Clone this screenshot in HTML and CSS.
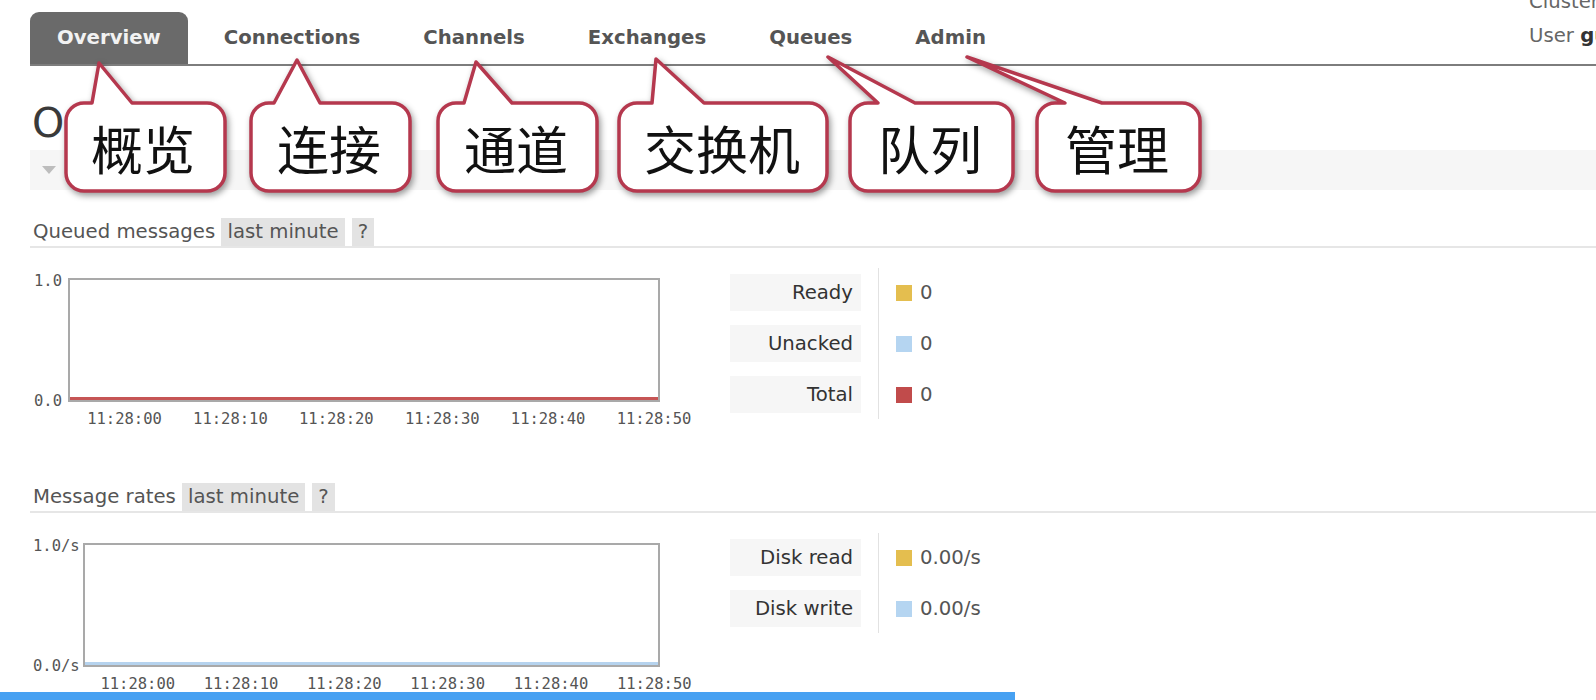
FILE: index.html
```html
<!DOCTYPE html>
<html lang="en">
<head>
<meta charset="utf-8">
<title>RabbitMQ Management - Overview</title>
<link rel="stylesheet" href="styles.css">
</head>
<body>
<div class="page">
  <header class="top">
    <ul class="tabs">
      <li class="tab active">Overview</li>
      <li class="tab">Connections</li>
      <li class="tab">Channels</li>
      <li class="tab">Exchanges</li>
      <li class="tab">Queues</li>
      <li class="tab">Admin</li>
    </ul>
    <div class="login">
      <div>Cluster <b>rabbit@localhost</b></div>
      <div>User <b>guest</b></div>
    </div>
  </header>

  <main class="content">
    <h1 class="title">Overview</h1>
    <div class="totals-bar"><span class="tri"></span></div>

    <section class="graph-sec">
      <h3 class="sec-head">Queued messages <span class="badge">last minute</span><span class="badge">?</span></h3>
      <div class="graph-row">
        <div class="chart">
          <div class="plot-row">
            <div class="yaxis"><span>1.0</span><span>0.0</span></div>
            <div class="plot-col">
              <div class="plot line-red"></div>
              <div class="xaxis"><span>11:28:00</span><span>11:28:10</span><span>11:28:20</span><span>11:28:30</span><span>11:28:40</span><span>11:28:50</span></div>
            </div>
          </div>
        </div>
        <div class="legend">
          <div class="legend-labels">
            <div class="lbl">Ready</div>
            <div class="lbl">Unacked</div>
            <div class="lbl">Total</div>
          </div>
          <div class="legend-values">
            <div class="val"><span class="sq gold"></span>0</div>
            <div class="val"><span class="sq blue"></span>0</div>
            <div class="val"><span class="sq red"></span>0</div>
          </div>
        </div>
      </div>
    </section>

    <section class="graph-sec">
      <h3 class="sec-head">Message rates <span class="badge">last minute</span><span class="badge">?</span></h3>
      <div class="graph-row">
        <div class="chart">
          <div class="plot-row">
            <div class="yaxis yaxis-rate"><span>1.0/s</span><span>0.0/s</span></div>
            <div class="plot-col">
              <div class="plot line-blue"></div>
              <div class="xaxis"><span>11:28:00</span><span>11:28:10</span><span>11:28:20</span><span>11:28:30</span><span>11:28:40</span><span>11:28:50</span></div>
            </div>
          </div>
        </div>
        <div class="legend">
          <div class="legend-labels">
            <div class="lbl">Disk read</div>
            <div class="lbl">Disk write</div>
          </div>
          <div class="legend-values">
            <div class="val"><span class="sq gold"></span>0.00/s</div>
            <div class="val"><span class="sq blue"></span>0.00/s</div>
          </div>
        </div>
      </div>
    </section>
  </main>
</div>

<svg class="callouts" width="1596" height="210" viewBox="0 0 1596 210">
  <g class="bubble">
    <path d="M84 103 L92 103 L99 63 L132 103 L207 103 A18 18 0 0 1 225 121 L225 173 A18 18 0 0 1 207 191 L84 191 A18 18 0 0 1 66 173 L66 121 A18 18 0 0 1 84 103 Z"/>
    <text x="143" y="147">概览</text>
  </g>
  <g class="bubble">
    <path d="M269 103 L274 103 L297 60 L320 103 L392 103 A18 18 0 0 1 410 121 L410 173 A18 18 0 0 1 392 191 L269 191 A18 18 0 0 1 251 173 L251 121 A18 18 0 0 1 269 103 Z"/>
    <text x="329" y="147">连接</text>
  </g>
  <g class="bubble">
    <path d="M456 103 L464 103 L476 62 L512 103 L579 103 A18 18 0 0 1 597 121 L597 173 A18 18 0 0 1 579 191 L456 191 A18 18 0 0 1 438 173 L438 121 A18 18 0 0 1 456 103 Z"/>
    <text x="516" y="147">通道</text>
  </g>
  <g class="bubble">
    <path d="M637 103 L652 103 L656 59 L704 103 L809 103 A18 18 0 0 1 827 121 L827 173 A18 18 0 0 1 809 191 L637 191 A18 18 0 0 1 619 173 L619 121 A18 18 0 0 1 637 103 Z"/>
    <text x="722" y="147">交换机</text>
  </g>
  <g class="bubble">
    <path d="M868 103 L878 103 L828 57 L915 103 L995 103 A18 18 0 0 1 1013 121 L1013 173 A18 18 0 0 1 995 191 L868 191 A18 18 0 0 1 850 173 L850 121 A18 18 0 0 1 868 103 Z"/>
    <text x="930" y="147">队列</text>
  </g>
  <g class="bubble">
    <path d="M1055 103 L1065 103 L967 57 L1102 103 L1182 103 A18 18 0 0 1 1200 121 L1200 173 A18 18 0 0 1 1182 191 L1055 191 A18 18 0 0 1 1037 173 L1037 121 A18 18 0 0 1 1055 103 Z"/>
    <text x="1117" y="147">管理</text>
  </g>
</svg>

<div class="progress"></div>
</body>
</html>
```

FILE: styles.css
```css
html, body {
  margin: 0;
  padding: 0;
  overflow: hidden;
  background: #fff;
}

body {
  position: relative;
  width: 1596px;
  height: 700px;
  font-family: "DejaVu Sans", Verdana, sans-serif;
  font-size: 19.7px;
  color: #555;
}

/* ---------- header ---------- */
.top {
  display: flex;
  height: 64px;
  margin-left: 30px;
  border-bottom: 2px solid #7d7d7d;
}

.tabs {
  flex: 1;
  display: flex;
  align-self: flex-end;
  gap: 9px;
  margin: 0;
  padding: 0;
  list-style: none;
}

.tab {
  height: 52px;
  line-height: 52px;
  padding: 0 27px;
  font-weight: bold;
  font-size: 19.7px;
  color: #555;
  border-radius: 9px 9px 0 0;
  white-space: nowrap;
}

.tab.active {
  background: #6a6a6a;
  color: #f2f2f2;
}

.login {
  width: 67px;
  flex-shrink: 0;
  margin-top: -15px;
  line-height: 34px;
  white-space: nowrap;
  color: #666;
}

.login b {
  color: #333;
}

/* ---------- content ---------- */
.content {
  padding-left: 30px;
}

.title {
  margin: 33px 0 0 2px;
  height: 48px;
  font-size: 41px;
  line-height: 48px;
  font-weight: normal;
  color: #3a3a3a;
}

.totals-bar {
  display: flex;
  align-items: center;
  height: 40px;
  margin-top: 3px;
  padding-left: 12px;
  background: #f6f6f6;
}

.tri {
  width: 0;
  height: 0;
  border-left: 7px solid transparent;
  border-right: 7px solid transparent;
  border-top: 8px solid #bdbdbd;
}

.graph-sec {
  margin-bottom: 64px;
}

.sec-head {
  display: flex;
  align-items: stretch;
  height: 28px;
  line-height: 28px;
  margin: 28px 0 0;
  padding-left: 3px;
  font-size: 19.7px;
  font-weight: normal;
  color: #555;
  border-bottom: 2px solid #e6e6e6;
  white-space: pre;
}

.badge {
  padding: 0 6px;
  background: #e3e3e3;
  color: #555;
}

.badge + .badge {
  margin-left: 7px;
}

.graph-row {
  display: flex;
  align-items: flex-start;
  margin-top: 20px;
}

.chart {
  width: 630px;
  margin-top: 10px;
  flex-shrink: 0;
}

.plot-row {
  display: flex;
  height: 124px;
}

.yaxis {
  display: flex;
  flex-direction: column;
  justify-content: space-between;
  margin: -5px 0 -7px;
  padding: 0 6px 0 4px;
  font-family: "DejaVu Sans Mono", monospace;
  font-size: 15.5px;
  line-height: 16px;
  color: #555;
}

.yaxis-rate {
  padding: 0 3px 0 3px;
}

.plot-col {
  flex: 1;
}

.plot {
  height: 124px;
  box-sizing: border-box;
  border: 2px solid #a9a9a9;
  background: #fff;
}

.plot.line-red {
  box-shadow: inset 0 -3px 0 #c65555;
}

.plot.line-blue {
  box-shadow: inset 0 -3px 0 #b6d3ee;
}

.xaxis {
  display: flex;
  margin-top: 9px;
  padding-left: 0.6%;
  font-family: "DejaVu Sans Mono", monospace;
  font-size: 15.5px;
  line-height: 16px;
  color: #555;
}

.xaxis span {
  flex: 0 0 18%;
  text-align: center;
  white-space: nowrap;
}

.legend {
  display: flex;
  margin-left: 70px;
}

.legend-labels,
.legend-values {
  display: flex;
  flex-direction: column;
  gap: 14px;
  padding: 6px 0;
}

.lbl {
  width: 131px;
  height: 37px;
  line-height: 37px;
  box-sizing: border-box;
  padding-right: 8px;
  text-align: right;
  background: #f6f6f6;
  color: #333;
  white-space: nowrap;
}

.legend-values {
  margin-left: 17px;
  padding-left: 17px;
  border-left: 1px solid #e2e2e2;
}

.val {
  display: flex;
  align-items: center;
  gap: 8px;
  height: 37px;
  color: #555;
  white-space: nowrap;
}

.sq {
  width: 16px;
  height: 16px;
}

.sq.gold { background: #e4be4f; }
.sq.blue { background: #b5d5f1; }
.sq.red  { background: #c14b4b; }

/* ---------- annotation overlay ---------- */
.callouts {
  position: absolute;
  top: 0;
  left: 0;
  pointer-events: none;
  overflow: visible;
}

.bubble path {
  fill: #fff;
  stroke: #b5384e;
  stroke-width: 3.5;
  stroke-linejoin: round;
  filter: drop-shadow(2px 3px 3px rgba(0, 0, 0, 0.4));
}

.bubble text {
  font-family: "Noto Sans CJK SC", sans-serif;
  font-size: 52px;
  fill: #111;
  text-anchor: middle;
  dominant-baseline: central;
}

/* video progress bar overlay */
.progress {
  position: fixed;
  left: 0;
  bottom: 0;
  width: 1015px;
  height: 8px;
  background: #47a1f2;
}
```
